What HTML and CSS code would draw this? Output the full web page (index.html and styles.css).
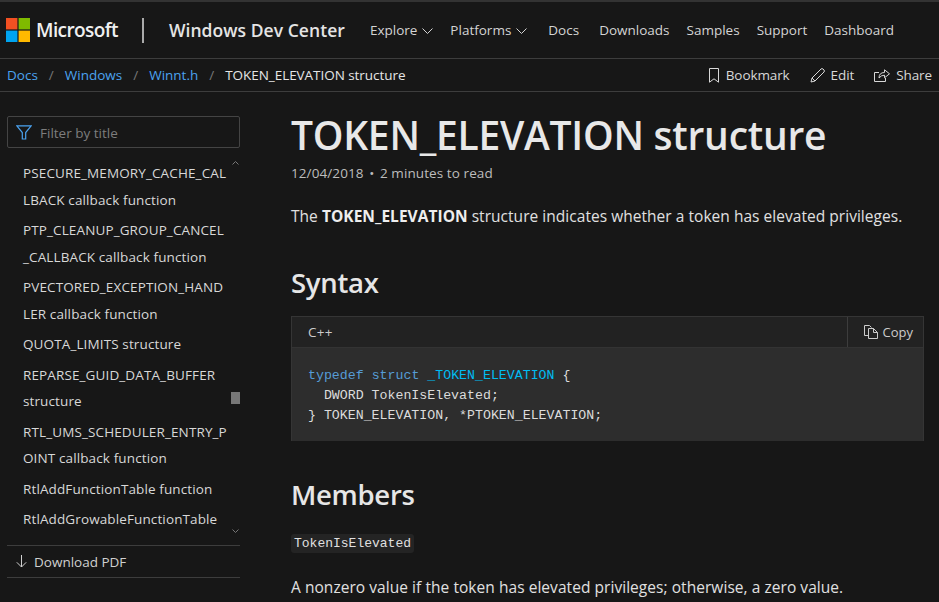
FILE: index.html
```html
<!DOCTYPE html>
<html lang="en">
<head>
<meta charset="utf-8">
<title>TOKEN_ELEVATION structure</title>
<link rel="stylesheet" href="styles.css">
</head>
<body>
<header class="topbar">
  <a class="brand">
    <svg class="logo" width="24" height="24" viewBox="0 0 24 24"><rect width="11.4" height="11.4" fill="#f25022"/><rect x="12.6" width="11.4" height="11.4" fill="#7fba00"/><rect y="12.6" width="11.4" height="11.4" fill="#00a4ef"/><rect x="12.6" y="12.6" width="11.4" height="11.4" fill="#ffb900"/></svg>
    <span class="brand-name">Microsoft</span>
  </a>
  <span class="divider"></span>
  <span class="site">Windows Dev Center</span>
  <nav class="nav">
    <a class="nav-item nav-drop">Explore <svg class="chev" width="11" height="6" viewBox="0 0 11 6"><path d="M.5.5l5 5 5-5" fill="none" stroke="currentColor"/></svg></a>
    <a class="nav-item nav-drop nav-wide">Platforms <svg class="chev" width="11" height="6" viewBox="0 0 11 6"><path d="M.5.5l5 5 5-5" fill="none" stroke="currentColor"/></svg></a>
    <a class="nav-item nav-docs">Docs</a>
    <a class="nav-item">Downloads</a>
    <a class="nav-item">Samples</a>
    <a class="nav-item">Support</a>
    <a class="nav-item">Dashboard</a>
  </nav>
</header>
<div class="crumbbar">
  <ol class="crumbs">
    <li><a>Docs</a></li><li class="sep">/</li>
    <li><a>Windows</a></li><li class="sep">/</li>
    <li><a>Winnt.h</a></li><li class="sep">/</li>
    <li class="current">TOKEN_ELEVATION structure</li>
  </ol>
  <div class="actions">
    <a class="action"><svg width="12" height="15" viewBox="0 0 12 15"><path d="M1.5.5h9v13.7L6 10.8l-4.500 3.400z" fill="none" stroke="currentColor"/></svg>Bookmark</a>
    <a class="action"><svg width="15" height="15" viewBox="0 0 15 15"><path d="M1 14l1-4L11 1q1-.8 2 0l1 1q.8 1 0 2L5 13zM2 10l3 3" fill="none" stroke="currentColor"/></svg>Edit</a>
    <a class="action"><svg width="16" height="14" viewBox="0 0 16 14"><path d="M5 4.500H.5v9h11V10M5 10q0-5.500 5.500-5.500V1.800l5 4-5 4V7.200Q7 7.200 5 10z" fill="none" stroke="currentColor"/></svg>Share</a>
  </div>
</div>
<div class="layout">
  <aside class="side">
    <div class="filter">
      <svg width="16" height="15" viewBox="0 0 16 15"><path d="M.8.8h14.400L9.700 7.500v6.500H6.300V7.500z" fill="none" stroke="#4ba3f0" stroke-width="1.200"/></svg>
      <span>Filter by title</span>
    </div>
    <div class="toc-wrap">
      <ul class="toc">
        <li>PSECURE_MEMORY_CACHE_CAL<br>LBACK callback function</li>
        <li>PTP_CLEANUP_GROUP_CANCEL<br>_CALLBACK callback function</li>
        <li>PVECTORED_EXCEPTION_HAND<br>LER callback function</li>
        <li>QUOTA_LIMITS structure</li>
        <li>REPARSE_GUID_DATA_BUFFER<br>structure</li>
        <li>RTL_UMS_SCHEDULER_ENTRY_P<br>OINT callback function</li>
        <li>RtlAddFunctionTable function</li>
        <li>RtlAddGrowableFunctionTable</li>
      </ul>
      <div class="scroll">
        <svg width="7" height="4" viewBox="0 0 7 4"><path d="M.5 3.500l3-3 3 3" fill="none" stroke="currentColor"/></svg>
        <span class="thumb"></span>
        <svg width="7" height="4" viewBox="0 0 7 4"><path d="M.5.500l3 3 3-3" fill="none" stroke="currentColor"/></svg>
      </div>
    </div>
    <a class="pdf"><svg width="11" height="13" viewBox="0 0 11 13"><path d="M5.500 0v12M.8 7.300l4.700 4.700 4.700-4.700" fill="none" stroke="currentColor"/></svg>Download PDF</a>
  </aside>
  <main class="main">
    <h1>TOKEN_ELEVATION structure</h1>
    <p class="meta">12/04/2018 <span class="dot">•</span> 2 minutes to read</p>
    <p class="intro">The <strong>TOKEN_ELEVATION</strong> structure indicates whether a token has elevated privileges.</p>
    <h2 class="syntax">Syntax</h2>
    <div class="code">
      <div class="code-head">
        <span class="lang">C++</span>
        <a class="copy"><svg width="14" height="14" viewBox="0 0 14 14"><path d="M4.500 10.500H.5V.5h5l2 2M4.500 3.500h5l4 4v6h-9zM9.500 3.500v4h4" fill="none" stroke="currentColor"/></svg>Copy</a>
      </div>
      <pre class="code-body"><span class="kw">typedef</span> <span class="kw">struct</span> <span class="ty">_TOKEN_ELEVATION</span> {
  DWORD TokenIsElevated;
} TOKEN_ELEVATION, *PTOKEN_ELEVATION;</pre>
    </div>
    <h2 class="members">Members</h2>
    <p class="term"><code>TokenIsElevated</code></p>
    <p class="desc">A nonzero value if the token has elevated privileges; otherwise, a zero value.</p>
  </main>
</div>
</body>
</html>
```
FILE: styles.css
```css
* { box-sizing: border-box; }
html, body { margin: 0; height: 100%; }
body {
  background: #171717;
  color: #e6e6e6;
  font-family: "Open Sans", "Noto Sans", sans-serif;
  font-size: 14px;
  overflow: hidden;
  height: 602px;
}
a { color: inherit; text-decoration: none; }
.topbar {
  height: 59px;
  border-top: 2px solid #333;
  border-bottom: 1px solid #3d3d3d;
  display: flex;
  align-items: center;
  padding-left: 6px;
}
.brand { display: flex; align-items: center; gap: 6px; }
.logo { display: block; }
.brand-name { font-size: 19px; font-weight: 600; letter-spacing: -.6px; color: #f0f0f0; }
.divider { width: 2px; height: 25px; background: #aaa; margin-left: 24px; }
.site { font-size: 17.500px; font-weight: 600; margin-left: 25px; letter-spacing: .05px; color: #e4e4e4; }
.nav { display: flex; align-items: center; margin-left: 25px; font-size: 13.500px; color: #d4d4d4; }
.nav-item { margin-right: 17px; white-space: nowrap; }
.nav-drop { display: flex; align-items: center; gap: 5px; }
.nav-wide { margin-right: 21px; }
.nav-docs { margin-right: 20px; }
.chev { display: block; margin-top: 2px; }
.crumbbar {
  height: 33px;
  border-bottom: 1px solid #3d3d3d;
  display: flex;
  align-items: center;
  justify-content: space-between;
  padding: 0 7px;
  font-size: 13.500px;
}
.crumbs { list-style: none; display: flex; margin: 0; padding: 0; }
.crumbs a { color: #4ba3f0; }
.sep { color: #777; margin: 0 11px; }
.current { color: #e6e6e6; letter-spacing: -.05px; }
.actions { display: flex; gap: 20px; color: #d8d8d8; letter-spacing: -.1px; }
.action { display: flex; align-items: center; gap: 6px; }
.layout { display: flex; }
.side { width: 233px; margin-left: 7px; padding-top: 24px; flex: none; }
.filter {
  height: 32px;
  border: 1px solid #444;
  border-radius: 2px;
  display: flex;
  align-items: center;
  gap: 8px;
  padding: 1px 0 0 8px;
  color: #7d7d7d;
  font-size: 13.500px;
}
.toc-wrap { position: relative; height: 397px; padding-top: 12px; overflow: hidden; }
.toc {
  list-style: none;
  margin: 0;
  padding: 0 0 0 16px;
  font-size: 13.500px;
  letter-spacing: .12px;
  line-height: 26.500px;
  color: #d8d8d8;
  white-space: nowrap;
}
.toc li { margin-bottom: 4px; }
.scroll {
  position: absolute;
  top: 13px;
  right: 0;
  bottom: 12px;
  width: 9px;
  display: flex;
  flex-direction: column;
  justify-content: space-between;
  align-items: center;
  color: #777;
}
.scroll svg { display: block; }
.thumb { position: absolute; top: 231px; width: 9px; height: 12px; background: #777; }
.pdf {
  height: 33px;
  border-top: 1px solid #3d3d3d;
  border-bottom: 1px solid #3d3d3d;
  display: flex;
  align-items: center;
  gap: 7px;
  padding-left: 9px;
  font-size: 13.500px;
  color: #d0d0d0;
}
.main { margin-left: 51px; width: 633px; flex: none; }
h1 { font-size: 39px; font-weight: 600; line-height: 48px; margin: 19px 0 0; letter-spacing: -.25px; color: #e8e8e8; }
.meta { margin: 4px 0 0; font-size: 13.500px; letter-spacing: .09px; color: #bdbdbd; line-height: 20px; }
.dot { margin: 0 2px; }
.intro { margin: 22px 0 0; font-size: 15.500px; letter-spacing: .035px; line-height: 22px; color: #e0e0e0; }
.intro strong { font-weight: 700; color: #eee; }
h2 { font-size: 27.500px; font-weight: 600; letter-spacing: -.3px; color: #e6e6e6; margin: 0; line-height: 36px; }
.syntax { margin-top: 38px; }
.code { background: #2d2d2d; margin-top: 15px; border: 1px solid #353535; border-bottom: 0; }
.code-head {
  height: 31px;
  background: #222;
  border-bottom: 1px solid #333;
  display: flex;
  justify-content: space-between;
  align-items: center;
  padding-left: 16px;
  font-size: 13px;
  color: #ccc;
}
.lang { font-size: 13.500px; letter-spacing: .3px; }
.copy { align-self: stretch; border-left: 1px solid #3d3d3d; display: flex; align-items: center; gap: 5px; padding: 0 10px 0 16px; }
.code-body {
  margin: 0;
  padding: 18px 16px 15px;
  font-family: "Liberation Mono", monospace;
  font-size: 13.250px;
  line-height: 20px;
  color: #dcdcdc;
}
.kw { color: #569cd6; }
.ty { color: #00bcf2; }
.members { margin-top: 36px; }
.term { margin: 20px 0 0; line-height: 18px; }
code {
  font-family: "Liberation Mono", monospace;
  font-size: 13px;
  background: #242424;
  padding: 2px 3px;
  border-radius: 3px;
  color: #e0e0e0;
}
.desc { margin: 23px 0 0; font-size: 15.500px; letter-spacing: .05px; line-height: 22px; color: #e0e0e0; }
```
